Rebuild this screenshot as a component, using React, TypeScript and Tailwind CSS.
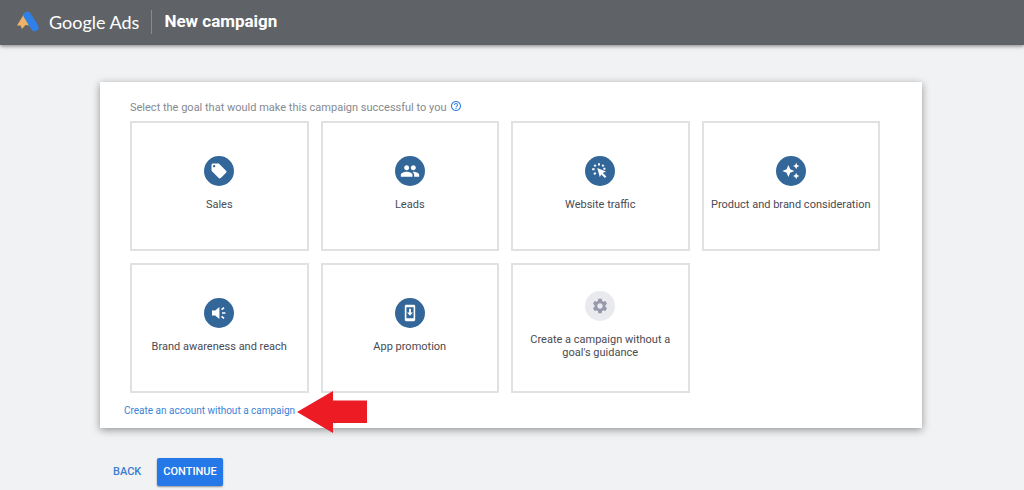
import React from "react";
import { MdGroup, MdHelpOutline, MdLocalOffer, MdSettings } from "react-icons/md";

const AdsLogo = () => (
    <svg viewBox="0 0 24 24" className="h-6 w-6 shrink-0" aria-hidden="true">
        <path d="M8 4 1 15.5h3.6L6 19l3.5-4 3.5.5z" fill="#efb268"/>
        <path d="M11.2 5.4 18.8 17.4" stroke="#2f80e8" strokeWidth="7.6" strokeLinecap="round"/>
    </svg>
);

const ClickIcon = () => (
    <svg viewBox="0 0 18 18" className="h-[18px] w-[18px]" aria-hidden="true">
        <path d="M6.2 6 15 9.6l-3.2 1.3 3.6 3.6-1.5 1.5-3.6-3.6L8.8 15z" fill="currentColor"/>
        <g stroke="currentColor" strokeWidth="1.9">
            <path d="M8 1.2v2.2M3.4 2.8l1.3 1.6M12.6 2.8l-1.3 1.6M1.2 7.2h2.4M3 12.4l1.7-1.6M12.4 6.8h2"/>
        </g>
    </svg>
);

const SparkleIcon = () => (
    <svg viewBox="0 0 18 18" className="h-[18px] w-[18px]" fill="currentColor" aria-hidden="true">
        <path d="M6.4 3l1.8 4.2L12.4 9l-4.2 1.8-1.8 4.2-1.8-4.2L.4 9l4.2-1.8z"/>
        <path d="M14.2.8l1 2.2 2.2 1-2.2 1-1 2.2-1-2.2-2.2-1 2.2-1z"/>
        <path d="M14.2 10.8l1 2.2 2.2 1-2.2 1-1 2.2-1-2.2-2.2-1 2.2-1z"/>
    </svg>
);

const SpeakerIcon = () => (
    <svg viewBox="0 0 18 18" className="h-[18px] w-[18px]" aria-hidden="true">
        <path d="M2 6.4h3.2L9.4 3v12l-4.2-3.4H2z" fill="currentColor"/>
        <path d="M11.6 5.6l2.4-2M12 9h3.4M11.6 12.4l2.4 2" stroke="currentColor" strokeWidth="1.7"/>
    </svg>
);

const PhoneIcon = () => (
    <svg viewBox="0 0 18 18" className="h-[18px] w-[18px]" aria-hidden="true">
        <path d="M5.2.8h7.6c.8 0 1.4.6 1.4 1.4v13.6c0 .8-.6 1.4-1.4 1.4H5.2c-.8 0-1.4-.6-1.4-1.4V2.2c0-.8.6-1.4 1.4-1.4zM5.4 3.2v11h7.2v-11z"
              fill="currentColor" fillRule="evenodd"/>
        <path d="M8.1 4.8h1.8v3.6h2L9 11.8 6.1 8.4h2z" fill="currentColor"/>
    </svg>
);

const goals = [
    { title: "Sales", icon: <MdLocalOffer size={18}/> },
    { title: "Leads", icon: <MdGroup size={20}/> },
    { title: "Website traffic", icon: <ClickIcon/> },
    { title: "Product and brand consideration", icon: <SparkleIcon/> },
    { title: "Brand awareness and reach", icon: <SpeakerIcon/> },
    { title: "App promotion", icon: <PhoneIcon/> },
    { title: "Create a campaign without a goal's guidance", icon: <MdSettings size={18}/>, muted: true },
];

type GoalCardProps = {
    title: string;
    icon: React.ReactNode;
    muted?: boolean;
};

const GoalCard = ({ title, icon, muted }: GoalCardProps) => (
    <button type="button"
            className="flex h-[130px] flex-col items-center justify-center gap-3 border-2 border-[#dfe1e3] bg-white px-1 pb-1.5">
        <span className={`flex h-[30px] w-[30px] items-center justify-center rounded-full ${muted ? "bg-[#e8eaed] text-[#9898ad]" : "bg-[#336699] text-white"}`}>
            {icon}
        </span>
        <span className="max-w-[164px] text-[11px] leading-[13px] text-[#4a4a52]">{title}</span>
    </button>
);

const App = () => {
    return (
        <div className="flex min-h-screen flex-col bg-[#f1f2f4] font-[Roboto,sans-serif]">
            <header className="flex h-[45px] items-center bg-[#5f6368] pb-0.5 pl-4 text-white shadow-[0_1px_4px_rgba(0,0,0,0.5)]">
                <AdsLogo/>
                <span className="ml-[9px] font-[Lato,sans-serif] text-lg">Google Ads</span>
                <div className="mx-3 h-6 w-px bg-[#85879a]"/>
                <h1 className="text-[17px] font-bold">New campaign</h1>
            </header>
            <main className="mt-[37px] mr-[102px] ml-[100px]">
                <section className="bg-white pt-4 pr-[42px] pb-[7px] pl-[30px] shadow-[0_2px_8px_rgba(0,0,0,0.4)]">
                    <div className="flex h-[23px] items-start gap-1 text-[11px] leading-5 text-[#858a90]">
                        <h2>Select the goal that would make this campaign successful to you</h2>
                        <MdHelpOutline size={12} className="mt-0.5 text-[#2f7de1]"/>
                    </div>
                    <div className="grid grid-cols-4 gap-3">
                        {goals.map((goal) => <GoalCard key={goal.title} {...goal}/>)}
                    </div>
                    <div className="relative -ml-1.5 flex w-fit items-center pt-2">
                        <a href="#" className="text-[10px] leading-5 text-[#3b82d6]">Create an account without a campaign</a>
                        <svg viewBox="0 0 70 42" className="absolute -top-0.5 left-full ml-0.5 h-[42px] w-[70px]" aria-hidden="true">
                            <path d="M0 21 36 0v9.5h34v22.5H36V42z" fill="#ed1c24"/>
                        </svg>
                    </div>
                </section>
                <div className="mt-[30px] flex items-center gap-4 pl-[13px] text-[11px] font-medium">
                    <button type="button" className="text-[#3b7dd0]">BACK</button>
                    <button type="button"
                            className="h-7 rounded-xs bg-[#2478e8] px-1.5 text-white shadow-[0_1px_2px_rgba(0,0,0,0.4)]">
                        CONTINUE
                    </button>
                </div>
            </main>
        </div>
    );
};

export default App;
